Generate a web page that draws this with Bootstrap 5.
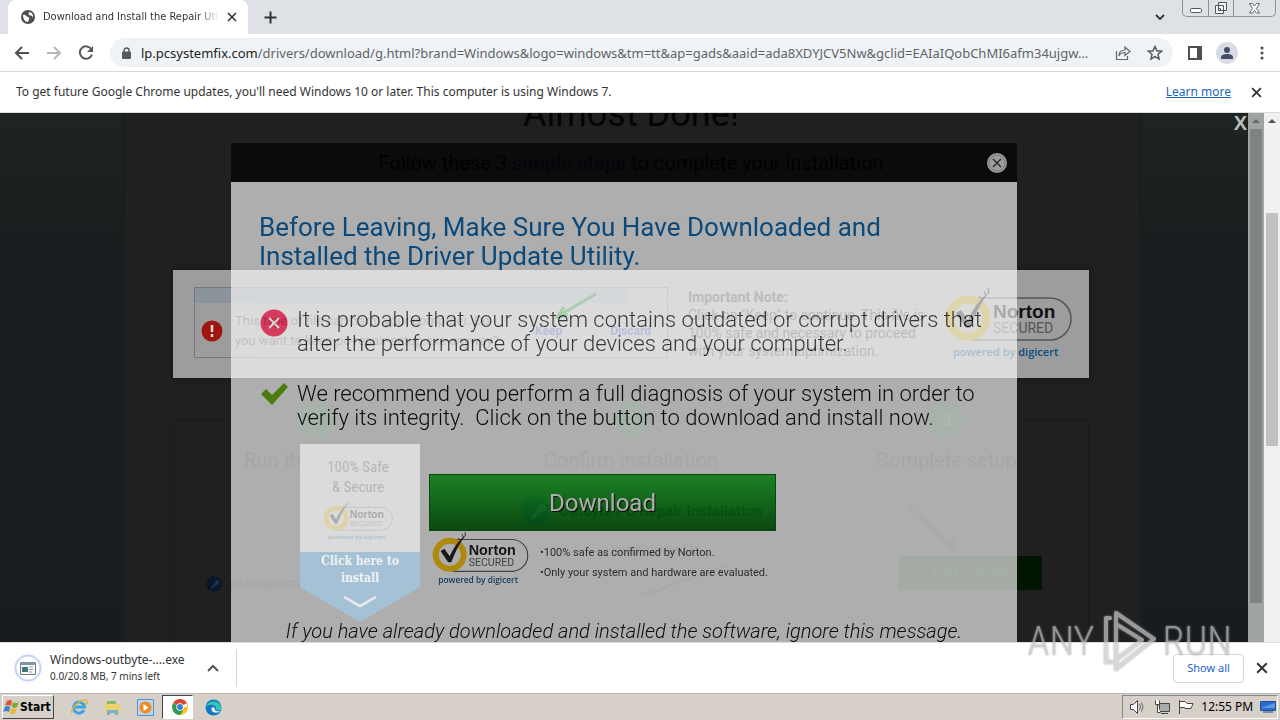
<!DOCTYPE html>
<html lang="en">
<head>
<meta charset="utf-8">
<meta name="viewport" content="width=device-width, initial-scale=1">
<title>Download and Install the Repair Utility</title>
<link rel="stylesheet" href="https://cdn.jsdelivr.net/npm/bootstrap@5.3.0/dist/css/bootstrap.min.css">
<script src="https://cdn.jsdelivr.net/npm/bootstrap@5.3.0/dist/js/bootstrap.bundle.min.js"></script>
<style>
  :root { --chrome-font: "Noto Sans", "DejaVu Sans Condensed", sans-serif; --page-font: Roboto, sans-serif; }
  body { font-family: var(--chrome-font); font-size: 12px; line-height: 16px; color: #333; background: #fff; }
  svg { display: block; flex: none; }
  button { border: 0; background: none; padding: 0; color: inherit; }

  .tabstrip { height: 34px; background: #dee1e6; padding-left: 8px; }
  .browser-tab { width: 240px; background: #fff; border-radius: 8px 8px 0 0; padding: 0 11px 0 13px; font: 11px/16px "DejaVu Sans Condensed", sans-serif; }
  .tab-title { -webkit-mask-image: linear-gradient(90deg, #000 88%, transparent); mask-image: linear-gradient(90deg, #000 88%, transparent); }
  .window-buttons { height: 17px; border: 1px solid #8d929b; border-top: 0; border-radius: 0 0 5px 5px; margin-right: 4px; }
  .window-buttons button { width: 25px; }
  .window-buttons button:last-child { width: 42px; }
  .window-buttons button + button { border-left: 1px solid #8d929b; }

  .toolbar { height: 38px; border-bottom: 1px solid #d5d7da; padding: 0 16px 0 14px; color: #5f6368; }
  .omnibox { height: 29px; background: #f0f3f5; border-radius: 15px; padding: 0 10px 0 12px; margin-right: -1px; color: #5f6368; }
  .url-field { font-size: 13px; line-height: 20px; margin-left: 10px; }
  .url-field b { font-weight: 400; color: #222; }
  .avatar { width: 22px; height: 22px; border-radius: 50%; background: #d9dce4; }
  .toolbar-end { gap: 14px; margin-left: 16px; }

  .infobar { height: 41px; border-bottom: 1px solid #dcdcdc; padding: 0 18px 0 16px; }
  .infobar a { color: #1b66b5; }

  .viewport { background: #f1f1f1; min-height: 0; }
  .web-frame { background: linear-gradient(#1f2321, #191d1f 28%, #181c1f); }
  .layer { position: absolute; inset: 0; overflow: hidden; }
  .outer-scroll { width: 16px; }
  .outer-scroll .thumb { height: 233px; width: 12px; margin: 84px auto 0; background: #c1c1c1; }
  .inner-scroll { position: absolute; top: 0; right: 0; bottom: 0; width: 16px; background: #9fa3a3; }
  .inner-scroll .thumb { width: 12px; height: 474px; background: #7f8482; }

  .sheet { width: 1020px; max-width: 100%; min-height: 100%; margin: 0 auto; background: #202020; border: solid #1b1e1e; border-width: 0 3px; color: #040404; font-family: var(--page-font); padding: 0 50px 0 48px; }
  .sheet h1 { font-size: 36px; line-height: 40px; font-weight: 400; margin: -19px 0 19px; }
  .lead-line { font-size: 20px; line-height: 24px; margin: -2px 0 21px; }
  .lead-line b { font-weight: 500; color: #06111c; }
  .pick-line { width: 392px; height: 48px; margin: 0 auto 26px; border: 1px solid #1c1c1c; font-size: 18px; line-height: 46px; color: #1b1b1b; }
  .notice { background: #9d9d9d; height: 108px; padding: 17px 15px 0 21px; box-shadow: 0 0 4px #111; color: #444; font-size: 14px; line-height: 18px; }
  .warn-box { width: 474px; height: 71px; border: 1px solid #777; }
  .warn-bar { height: 15px; border-bottom: 1px solid #89929b; }
  .warn-bar div { width: 432px; height: 100%; background: #8c949b; }
  .warn-copy { font: 13px/20px var(--page-font); color: #555; padding-left: 6px; }
  .warn-copy a { color: #3b4e9b; font-weight: 700; font-size: 12px; text-decoration: none; }
  .notice-copy { width: 274px; padding: 1px 0 0 20px; white-space: nowrap; }
  .steps { margin-top: 42px; border: 1px solid #1a1a1a; border-bottom: 0; height: 224px; }
  .step { margin-top: -19px; width: 316px; }
  .steps-row { margin: 0 -16px; }
  .step-dot { width: 36px; height: 36px; border-radius: 50%; background: #0c2b18; color: #2c3c30; font-size: 18px; line-height: 36px; margin: 0 auto; }
  .step h2 { font-size: 20px; line-height: 24px; font-weight: 400; margin: 10px 0 0; color: #080808; }
  .product-name { font-size: 15px; }
  .go-button { background: #021402; color: #0c2a10; width: 143px; height: 34px; }
  .ribbon { position: absolute; left: 300px; top: 331px; width: 120px; color: #333; font: 15px/20px "Roboto Condensed", Roboto, sans-serif; }
  .ribbon-top { background: #9d9d9d; height: 108px; padding: 13px 4px 0 0; }
  .ribbon-flag { background: #02558d; height: 70px; clip-path: polygon(0 0, 100% 0, 100% 50%, 50% 100%, 0 50%); font: 700 12px/17px "Liberation Serif", serif; font-family: "DejaVu Serif Condensed", "DejaVu Serif", serif; color: #ddd; padding-top: 1px; }

  .exit-modal { width: 786px; max-width: 100%; margin: 30px auto 0; opacity: .64; font-family: var(--page-font); color: #000; }
  .exit-head { height: 39px; background: #000; padding-right: 10px; }
  .exit-body { background: #fff; height: 470px; padding: 31px 29px; white-space: nowrap; }
  .exit-body h2 { font-size: 26px; line-height: 29px; color: #0061ad; font-weight: 400; margin: 0 -1px 37px; }
  .exit-body p { font-size: 22px; line-height: 24px; font-weight: 300; margin: 0; }
  .exit-body .second-tip { margin-top: 26px; }
  .download-row { margin-top: 44px; padding-left: 169px; }
  .download-button { width: 347px; height: 57px; background: linear-gradient(#1ab829, #006008); border: 1px solid #005a08; color: #fff; font-size: 24px; text-shadow: 1px 1px 1px #000; }
  .facts-row { padding-left: 170px; gap: 10px; }
  .facts { font-size: 11px; line-height: 20px; color: #333; padding-top: 12px; }
  .exit-body .ignore-line { font-size: 20px; font-style: italic; margin-top: 30px; }
  .frame-close { position: absolute; right: 17px; top: 0; font: 700 20px/20px "Liberation Sans", sans-serif; color: #bbb; }

  .download-bar { height: 51px; border-top: 1px solid #ddd; padding: 0 12px 0 14px; }
  .download-item { width: 223px; height: 38px; border-right: 1px solid #d5d5d5; }
  .download-item small { font-size: 10px; line-height: 16px; }
  .show-all { width: 71px; height: 29px; border: 1px solid #d5d7da; border-radius: 4px; color: #1a66c9; font-size: 11px; }
  .brandmark { position: absolute; right: 48px; bottom: 46px; opacity: .72; color: #bfbfbf; font: 300 40px/60px "Roboto Condensed", Roboto, sans-serif; filter: drop-shadow(0 0 1px #999); pointer-events: none; }

  .taskbar { height: 27px; background: #d6d0c8; border-top: 1px solid #bdbab5; padding: 1px 2px 1px 2px; color: #000; }
  .start-button { width: 52px; border: 1px solid; border-color: #fff #444 #444 #fff; font: 700 12px/16px "DejaVu Sans Condensed", sans-serif; background: #d6d0c8; }
  .task-active { width: 31px; background: #fff; border: 1px solid; border-color: #444 #fff #fff #444; }
  .tray { width: 156px; border: 1px solid; border-color: #888 #fff #fff #888; padding: 0 1px 0 6px; }
</style>
</head>
<body class="vh-100 d-flex flex-column overflow-hidden position-relative">

<svg width="0" height="0" class="position-absolute" aria-hidden="true">
  <symbol id="norton" viewBox="0 0 132 76">
    <path d="M30 11H108a21 21 0 0 1 0 42H30" fill="none" stroke="#555" stroke-width="1.5"/>
    <circle cx="26" cy="31" r="18.5" fill="none" stroke="var(--ring)" stroke-width="8"/>
    <path d="M14 26l5-3 7 10C32 20 39 11 48 4c-9 11-15 24-20 37h-4z" fill="#151515"/>
    <path d="M42 4l2 4M46 1l1 5M37 9l4 4" stroke="#151515" stroke-width="1"/>
    <text x="51" y="31" font-family="Liberation Sans" font-weight="700" font-size="19" fill="#111">Norton</text>
    <text x="51" y="46" font-family="Roboto" font-size="14" fill="#555">SECURED</text>
    <text x="11" y="69" font-family="Open Sans" font-weight="600" font-size="11" fill="#0b4a7d">powered by digicert</text>
  </symbol>
  <symbol id="cross" viewBox="0 0 10 10"><path d="M1 1l8 8M9 1l-8 8" stroke="currentColor" stroke-width="1.6"/></symbol>
  <symbol id="wrench-dot" viewBox="0 0 20 20"><circle cx="10" cy="10" r="8.5" fill="#04192c" stroke="#04192c" stroke-width="3" stroke-dasharray="4 2"/><path d="M6 14l5-5a3 3 0 1 1 2 2l-5 5" fill="#20303e"/></symbol>
</svg>

<header>
  <div class="tabstrip d-flex">
    <div class="browser-tab d-flex align-items-center gap-2">
      <svg width="14" height="14" viewBox="0 0 14 14"><circle cx="7" cy="7" r="7" fill="#4a4d51"/><path d="M2 5c3-1 3 2 5 2s1 3 0 5c-3 0-5-3-5-7zM7 2c2 1 0 2 1 3s4 0 4 3c1-3-1-6-5-6z" fill="#fff"/></svg>
      <span class="tab-title flex-grow-1 text-nowrap overflow-hidden">Download and Install the Repair Utility</span>
      <button aria-label="Close tab"><svg width="10" height="10"><use href="#cross"/></svg></button>
    </div>
    <button class="ms-3" aria-label="New tab"><svg width="13" height="13" viewBox="0 0 13 13"><path d="M6.500 0.500v12M.5 6.500h12" stroke="#333" stroke-width="2"/></svg></button>
    <button class="ms-auto me-3" aria-label="Search tabs"><svg width="12" height="8" viewBox="0 0 12 8"><path d="M2 2l4 4 4-4" fill="none" stroke="#333" stroke-width="1.800"/></svg></button>
    <div class="window-buttons d-flex">
      <button aria-label="Minimize"><svg class="mx-auto" width="14" height="12" viewBox="0 0 14 12"><rect x="1.500" y="6.500" width="11" height="4" rx="1" fill="#fff" stroke="#555"/></svg></button>
      <button aria-label="Restore"><svg class="mx-auto" width="14" height="14" viewBox="0 0 14 14"><path d="M4.500 1.500h8v8h-8zM1.500 4.500h8v8h-8zM4.500 7.500h2v2h-2z" fill="#f4f5f7" stroke="#555"/></svg></button>
      <button aria-label="Close"><svg class="mx-auto" width="13" height="13" viewBox="0 0 13 13"><path d="M1.500 1.500h3l2 2.500 2-2.500h3L8.500 6.500l3 4.500h-3l-2-2.500-2 2.500h-3l3-4.500z" fill="#fff" stroke="#666"/></svg></button>
    </div>
  </div>

  <div class="toolbar d-flex align-items-center">
    <button aria-label="Back"><svg width="16" height="16" viewBox="0 0 16 16"><path d="M15 8H2M8 2L2 8l6 6" fill="none" stroke="#4d5156" stroke-width="2"/></svg></button>
    <button class="ms-3" aria-label="Forward"><svg width="16" height="16" viewBox="0 0 16 16"><path d="M1 8h13M8 2l6 6-6 6" fill="none" stroke="#b5b7ba" stroke-width="2"/></svg></button>
    <button class="ms-3 me-3" aria-label="Reload"><svg width="16" height="16" viewBox="0 0 16 16"><path d="M13.500 4.500A6.200 6.200 0 1 0 14 9.500" fill="none" stroke="#55585c" stroke-width="2"/><path d="M15 1v6H9z" fill="#55585c"/></svg></button>
    <div class="omnibox d-flex align-items-center flex-grow-1 overflow-hidden">
      <svg width="9" height="12" viewBox="0 0 9 12"><rect y="4.500" width="9" height="7.500" rx="1" fill="#55585c"/><path d="M2 5V3.500a2.500 2.500 0 0 1 5 0V5" fill="none" stroke="#55585c" stroke-width="1.400"/></svg>
      <div class="url-field flex-grow-1 text-truncate" role="textbox" aria-label="Address" tabindex="0"><b>lp.pcsystemfix.com</b>/drivers/download/g.html?brand=Windows&amp;logo=windows&amp;tm=tt&amp;ap=gads&amp;aaid=ada8XDYJCV5Nw&amp;gclid=EAIaIQobChMI6afm34ujgw...</div>
      <button class="ms-2" aria-label="Share"><svg width="16" height="16" viewBox="0 0 16 16"><path d="M1.500 6v8.500h11V11M4 11c0-4 2-6 6-6V2l5 4.500-5 4V7.500C7 7.500 5 8.500 4 11z" fill="none" stroke="#666" stroke-width="1.200"/></svg></button>
      <button class="ms-3" aria-label="Bookmark"><svg width="16" height="16" viewBox="0 0 16 16"><path d="M8 1.500l1.900 4.300 4.700.4-3.600 3.100 1.100 4.600L8 11.500l-4.100 2.400L5 9.300 1.400 6.200l4.700-.4z" fill="none" stroke="#55585c" stroke-width="1.500"/></svg></button>
    </div>
    <div class="toolbar-end d-flex align-items-center">
      <button aria-label="Side panel"><svg width="14" height="14" viewBox="0 0 14 14"><path d="M1 1h12v12H1z" fill="none" stroke="#4d5156" stroke-width="2"/><path d="M9 1h5v12H9z" fill="#4d5156"/></svg></button>
      <button class="avatar d-flex align-items-center justify-content-center" aria-label="Profile"><svg width="12" height="12" viewBox="0 0 12 12" fill="#454e68"><circle cx="6" cy="3" r="3"/><path d="M0 12V10c0-4 12-4 12 0v2z"/></svg></button>
      <button class="ps-2" aria-label="Menu"><svg width="4" height="14" viewBox="0 0 4 14" fill="#4d5156"><circle cx="2" cy="2" r="1.600"/><circle cx="2" cy="7" r="1.600"/><circle cx="2" cy="12" r="1.600"/></svg></button>
    </div>
  </div>

  <div class="infobar d-flex align-items-center">
    <span>To get future Google Chrome updates, you'll need Windows 10 or later. This computer is using Windows 7.</span>
    <a href="#" class="ms-auto me-3">Learn more</a>
    <button class="ms-1" aria-label="Dismiss"><svg width="11" height="11"><use href="#cross"/></svg></button>
  </div>
</header>

<main class="viewport d-flex flex-grow-1 overflow-hidden">
  <div class="web-frame flex-grow-1 position-relative overflow-hidden">
    <div class="layer">
      <div class="sheet d-flow-root">
        <div class="overflow-hidden">
          <h1 class="text-center">Almost Done!</h1>
          <p class="lead-line text-center">Follow these 3 <b>simple steps</b> to complete your installation</p>
          <div class="pick-line text-center">You must keep the download file</div>
        </div>
        <section class="notice d-flex">
          <div class="warn-box">
            <div class="warn-bar"><div></div></div>
            <div class="warn-copy d-flex align-items-center pt-2">
              <svg width="22" height="22" viewBox="0 0 22 22"><circle cx="11" cy="11" r="10.500" fill="#a0150f"/><path d="M11 5v7M11 14v3" stroke="#ddd" stroke-width="2.500"/></svg>
              <span class="ms-2 ps-1 text-nowrap">This type of file can harm your computer. Do<br>you want to keep pc-repair-setup.exe anyway?</span>
              <a href="#" class="ms-auto me-5">Keep</a><a href="#" class="me-3">Discard</a>
            </div>
          </div>
          <p class="notice-copy mb-0"><strong>Important Note:</strong><br>Click on "Keep" to continue. This file is<br>100% safe and necessary to proceed<br>with your system optimization.</p>
          <svg width="132" height="76" style="--ring:#a88c1c"><use href="#norton"/></svg>
        </section>
        <section class="steps">
          <div class="steps-row d-flex justify-content-between text-center">
            <div class="step"><div class="step-dot">1</div><h2>Run the installer</h2>
              <div class="d-flex align-items-center ms-5 mt-5 pt-5"><svg width="16" height="16" class="mt-2"><use href="#wrench-dot"/></svg><span class="mt-2 ms-2">pc-repair-setup.exe</span></div></div>
            <div class="step"><div class="step-dot">2</div><h2>Confirm installation</h2>
              <div class="d-flex align-items-center ms-5 mt-4"><svg width="30" height="30"><use href="#wrench-dot"/></svg><strong class="product-name text-nowrap ms-2">Outbyte PC Repair Installation</strong></div>
              <div class="mt-3 ms-5">Installing the file</div>
              <svg class="ms-auto me-5" width="130" height="40" viewBox="0 0 130 40"><path d="M115 8L30 38" stroke="#101010" stroke-width="2"/></svg></div>
            <div class="step"><div class="step-dot">3</div><h2>Complete setup</h2>
              <svg class="ms-5 mt-4" width="120" height="60" viewBox="0 0 120 60"><path d="M70 9l50 46M108 50l12 5-5-12" fill="none" stroke="#0b1a0d" stroke-width="3"/></svg>
              <button class="go-button ms-5">Click to install</button></div>
          </div>
        </section>
      </div>
      <aside class="ribbon text-center">
        <div class="ribbon-top">100% Safe<br>&amp; Secure<svg class="mx-auto mt-1" width="72" height="42" style="--ring:#a87f10"><use href="#norton"/></svg></div>
        <div class="ribbon-flag">Click here to<br>install<svg class="mx-auto mt-2" width="36" height="14" viewBox="0 0 36 14"><path d="M2 2l16 9 16-9" fill="none" stroke="#ccc" stroke-width="2.500"/></svg></div>
      </aside>
      <svg class="position-absolute" style="left:550px;top:176px" width="50" height="36" viewBox="0 0 50 36"><path d="M46 5L8 27M18 26l-11 2 7-10" fill="none" stroke="#19731f" stroke-width="3"/></svg>
    </div>

    <div class="layer pe-3">
      <section class="exit-modal" role="dialog" aria-label="Before leaving">
        <div class="exit-head d-flex align-items-center justify-content-end">
          <button aria-label="Close dialog"><svg width="20" height="20" viewBox="0 0 20 20"><circle cx="10" cy="10" r="10" fill="#e4e4e4"/><path d="M6 6l8 8M14 6l-8 8" stroke="#333" stroke-width="1.500"/><circle cx="10" cy="10" r="8" fill="none" stroke="#aaa"/></svg></button>
        </div>
        <div class="exit-body">
          <h2>Before Leaving, Make Sure You Have Downloaded and<br>Installed the Driver Update Utility.</h2>
          <div class="d-flex gap-2">
            <svg width="29" height="29" viewBox="0 0 29 29"><circle cx="14" cy="15" r="13.500" fill="#f5053b"/><path d="M9 10l10 10M19 10L9 20" stroke="#fff" stroke-width="2"/></svg>
            <p>It is probable that your system contains outdated or corrupt drivers that<br>alter the performance of your devices and your computer.</p>
          </div>
          <div class="second-tip d-flex gap-2">
            <svg width="29" height="24" viewBox="0 0 29 24"><path d="M1 12l5-5 6 6L24 1l4 4-16 18z" fill="#62b004"/></svg>
            <p>We recommend you perform a full diagnosis of your system in order to<br>verify its integrity.&nbsp; Click on the button to download and install now.</p>
          </div>
          <div class="download-row"><button class="download-button">Download</button></div>
          <div class="facts-row d-flex">
            <svg width="100" height="58" style="--ring:#ffc400"><use href="#norton"/></svg>
            <div class="facts">•100% safe as confirmed by Norton.<br>•Only your system and hardware are evaluated.</div>
          </div>
          <p class="ignore-line text-center">If you have already downloaded and installed the software, ignore this message.</p>
        </div>
      </section>
    </div>

    <button class="frame-close" aria-label="Close offer">X</button>
    <div class="inner-scroll"><svg width="16" height="16" viewBox="0 0 16 16"><path d="M4 10l4-4 4 4z" fill="#666"/></svg><div class="thumb mx-auto"></div></div>
  </div>
  <div class="outer-scroll"><svg width="16" height="16" viewBox="0 0 16 16"><path d="M4 10l4-4 4 4z" fill="#555"/></svg><div class="thumb"></div></div>
</main>

<footer>
  <div class="download-bar d-flex align-items-center">
    <div class="download-item d-flex align-items-center">
      <svg width="28" height="28" viewBox="0 0 28 28"><circle cx="14" cy="14" r="12.500" fill="#fff" stroke="#c3d3f0" stroke-width="2"/><path d="M6.500 8.500h15v12h-15z" fill="#f8f8f8" stroke="#777"/><path d="M6 8h16v3H6z" fill="#7a98a5"/><path d="M8 13h6v5H8z" fill="#3c7b80"/><path d="M15 13h4M15 15.500h4M15 18h3" stroke="#999"/></svg>
      <div class="ms-2"><div>Windows-outbyte-....exe</div><small class="d-block">0.0/20.8 MB, 7 mins left</small></div>
      <button class="ms-auto me-3" aria-label="Download options"><svg width="14" height="10" viewBox="0 0 14 10"><path d="M2 8l5-5 5 5" fill="none" stroke="#555" stroke-width="2"/></svg></button>
    </div>
    <button class="show-all ms-auto me-2">Show all</button>
    <button class="ms-1" aria-label="Close downloads bar"><svg width="12" height="12"><use href="#cross"/></svg></button>
  </div>
  <div class="taskbar d-flex">
    <button class="start-button d-flex align-items-center"><svg width="17" height="16" viewBox="0 0 17 16"><path d="M4 2q3-2 5 0L8 7Q5 5 2 7z" fill="#e0532a"/><path d="M10 3q3 2 6 0l-2 5q-3 2-5 0z" fill="#76ab32"/><path d="M2 8q3-2 5 0l-1 5q-3-2-6 0z" fill="#3a83c9"/><path d="M8 9q3 2 6 0l-2 5q-3 2-5 0z" fill="#efb82a"/></svg>Start</button>
    <div class="d-flex align-items-center flex-grow-1">
      <button class="ms-3" aria-label="Internet Explorer"><svg width="18" height="18" viewBox="0 0 18 18"><path d="M14 12a5.500 5.500 0 1 1 .5-3H5" fill="none" stroke="#3aa5e0" stroke-width="3"/><path d="M2 15C0 12 10 1 15 2s1 4 0 5" fill="none" stroke="#e3b43c" stroke-width="1.500"/></svg></button>
      <button class="ms-3" aria-label="Explorer"><svg width="17" height="17" viewBox="0 0 17 17"><path d="M1 3h6l1 2h8v10H1z" fill="#ecd16f"/><path d="M3 2h9v3H3z" fill="#87b867"/><path d="M3 16v-5h11v5h-3v-2H6v2z" fill="#6fb4d8"/></svg></button>
      <button class="ms-3" aria-label="Media Player"><svg width="17" height="17" viewBox="0 0 17 17"><path d="M.5.500h16v16H.5z" fill="#b9d5ee" stroke="#5b91c4"/><circle cx="8.500" cy="8.500" r="6" fill="#f08a1d"/><path d="M6.500 5l5 3.500-5 3.500z" fill="#fff"/></svg></button>
      <button class="task-active ms-2 ps-1 align-self-stretch d-flex align-items-center justify-content-center" aria-label="Chrome"><svg width="16" height="16" viewBox="0 0 16 16"><path d="M8 8L1.100 4A8 8 0 0 1 15 4z" fill="#dc4434"/><path d="M8 8h6.900l.1-4A8 8 0 0 1 8 16z" fill="#f6c32b"/><path d="M8 8l3 4-3 4A8 8 0 0 1 1.100 4z" fill="#2c9b4f"/><circle cx="8" cy="8" r="3.700" fill="#fff"/><circle cx="8" cy="8" r="2.900" fill="#3b78e0"/></svg></button>
      <button class="ms-2 ps-1" aria-label="Edge"><svg width="17" height="17" viewBox="0 0 17 17"><circle cx="8.500" cy="8.500" r="8" fill="#1478c8"/><path d="M1 8a8 8 0 0 1 15.500 1c0 3-5 3-5.500 1 1-4-6-6-10-2z" fill="#35c6b0"/><path d="M7 8c-2 4 2 7 7 5l1-1c-4 1-6-1-5-3z" fill="#e6f1f6"/></svg></button>
    </div>
    <div class="tray d-flex align-items-center justify-content-between">
      <svg width="18" height="16" viewBox="0 0 18 16"><path d="M1.500 5.500h3l4-4v13l-4-4h-3z" fill="#fff" stroke="#444"/><path d="M10.500 5q2 3 0 6M12.500 3.500q3 4.500 0 9" fill="none" stroke="#666"/></svg>
      <svg width="17" height="16" viewBox="0 0 17 16"><path d="M5.500 4.500h10v8h-10z" fill="#a8aaa8" stroke="#444"/><path d="M7 14.500h7M1.500 1.500v4h4v-4M3.500 5.500v8h3" stroke="#444" fill="#fff"/></svg>
      <svg width="17" height="16" viewBox="0 0 17 16"><path d="M1.500 1v14M2 2.500h5l2 2h6l-2 5H8l-2-1H2" fill="#fff" stroke="#444"/></svg>
      <span class="text-nowrap">12:55 PM</span>
      <svg width="16" height="14" viewBox="0 0 16 14"><path d="M.5 1.500h15v9H.5z" fill="#2a6bd0" stroke="#25508c"/><path d="M1 8l14-5v5z" fill="#5c9ae8"/><path d="M3 12h10" stroke="#7990ad" stroke-width="2"/></svg>
    </div>
  </div>
</footer>

<div class="brandmark d-flex align-items-center gap-1" aria-hidden="true">
  <span>ANY</span>
  <svg width="60" height="64" viewBox="0 0 60 64" fill="none" stroke="#c8c8c8" stroke-width="4" stroke-linejoin="round" stroke-linecap="round"><path d="M11 8H7v44h5M17 50V3l38 26-38 30v-9l26-20M17 14l26 16"/></svg>
  <span>RUN</span>
</div>
</body>
</html>
